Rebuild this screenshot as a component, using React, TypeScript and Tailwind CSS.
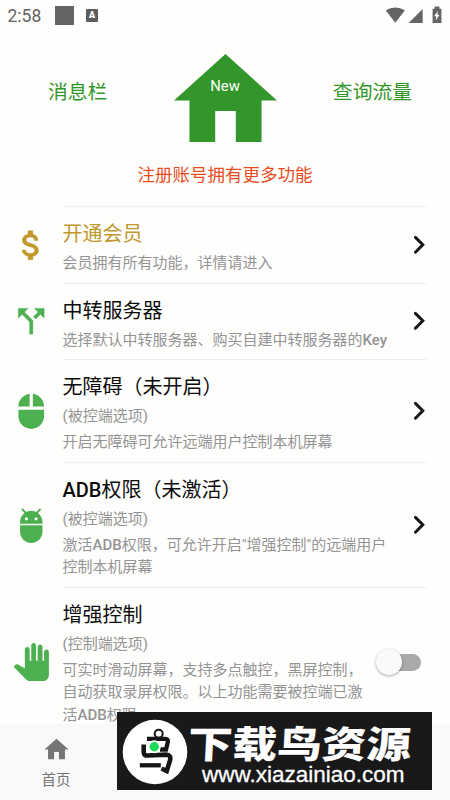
import type { ReactNode } from "react";

const icons = {
  money:
    "M11.8 10.9c-2.27-.59-3-1.2-3-2.15 0-1.09 1.01-1.85 2.7-1.85 1.78 0 2.44.85 2.5 2.1h2.21c-.07-1.72-1.12-3.3-3.21-3.81V3h-3v2.16c-1.94.42-3.5 1.68-3.5 3.61 0 2.31 1.91 3.46 4.7 4.13 2.5.6 3 1.48 3 2.41 0 .69-.49 1.79-2.7 1.79-2.06 0-2.87-.92-2.98-2.1h-2.2c.12 2.19 1.76 3.42 3.68 3.83V21h3v-2.15c1.95-.37 3.5-1.5 3.5-3.55 0-2.84-2.43-3.81-4.7-4.4z",
  split:
    "M14 4l2.29 2.29-2.88 2.88 1.42 1.42 2.88-2.88L20 10V4zm-4 0H4v6l2.29-2.29 4.71 4.7V20h2v-8.41l-5.29-5.3z",
  mouse:
    "M13 1.07V9h7c0-4.08-3.05-7.44-7-7.93zM4 15c0 4.42 3.58 8 8 8s8-3.58 8-8v-4H4v4zm7-13.93C7.05 1.56 4 4.92 4 9h7V1.07z",
  adb: "M5 16c0 3.87 3.13 7 7 7s7-3.13 7-7v-4H5v4zM16.12 4.37l2.1-2.1-.82-.83-2.3 2.31C14.16 3.28 13.12 3 12 3s-2.16.28-3.09.75L6.6 1.44l-.82.83 2.1 2.1C6.14 5.64 5 7.68 5 10v1h14v-1c0-2.32-1.14-4.36-2.88-5.63zM9 9c-.55 0-1-.45-1-1s.45-1 1-1 1 .45 1 1-.45 1-1 1zm6 0c-.55 0-1-.45-1-1s.45-1 1-1 1 .45 1 1-.45 1-1 1z",
  hand: "M23 5.5V20c0 2.2-1.8 4-4 4h-7.3c-1.08 0-2.1-.43-2.85-1.19L1 14.83s1.26-1.23 1.3-1.25c.22-.19.49-.29.79-.29.22 0 .42.06.6.16.04.01 4.31 2.46 4.31 2.46V4c0-.83.67-1.5 1.5-1.5S11 3.17 11 4v7h1V1.5c0-.83.67-1.5 1.5-1.5S15 .67 15 1.5V11h1V2.5c0-.83.67-1.5 1.5-1.5s1.5.67 1.5 1.5V11h1V5.5c0-.83.67-1.5 1.5-1.5s1.5.67 1.5 1.5z",
  home: "M10 20v-6h4v6h5v-8h3L12 3 2 12h3v8z",
};

function Latin({ children }: { children: ReactNode }) {
  return <span className="font-medium">{children}</span>;
}

function Chevron() {
  return (
    <svg width="14" height="20" viewBox="0 0 14 20" fill="none" stroke="#171717" strokeWidth="3" strokeLinecap="round">
      <path d="M3.4 2.4 10.8 9.8 3.4 17.2" />
    </svg>
  );
}

function Toggle() {
  return (
    <div className="flex h-[26px] w-[49.5px] items-center">
      <div className="ml-[2px] flex h-[17px] w-[43px] items-center rounded-full bg-[#a9a9a9]">
        <div className="-ml-[2px] h-[26px] w-[26px] shrink-0 rounded-full bg-[#fafafa] shadow-[0_1px_3px_rgba(0,0,0,0.35)]" />
      </div>
    </div>
  );
}

type RowProps = {
  icon: string;
  title: ReactNode;
  note?: string;
  lines: ReactNode[];
  height: string;
  gold?: boolean;
  bold?: boolean;
  toggle?: boolean;
};

function Row({ icon, title, note, lines, height, gold, bold, toggle }: RowProps) {
  return (
    <div className={"flex shrink-0 " + height}>
      <div className="flex w-[62.5px] shrink-0 items-center pt-px pl-[12px]">
        <svg
          width="38.5"
          height="38.5"
          viewBox="0 0 24 24"
          strokeWidth={bold ? 0.3 : 0}
          className={gold ? "fill-[#c0982c] stroke-[#c0982c]" : "fill-[#4caf50] stroke-[#4caf50]"}
        >
          <path d={icon} />
        </svg>
      </div>
      <div className="flex w-[363px] items-center border-t border-[#ececea]">
        <div className="h-full flex-1 pt-[13px] whitespace-nowrap">
          <div className={"text-[20px] leading-[28px] " + (gold ? "text-[#c0982c]" : "text-[#0c0c0c]")}>{title}</div>
          <div className="mt-[4px] text-[15px] leading-[22.4px] text-[#949494]">
            {note && <div className="mb-[3.6px]">{note}</div>}
            {lines.map((line, i) => (
              <div key={i}>{line}</div>
            ))}
          </div>
        </div>
        {toggle ? <Toggle /> : <Chevron />}
      </div>
    </div>
  );
}

function StatusBar() {
  return (
    <div className="flex h-[31px] shrink-0 items-center pr-[7px] pl-[7.5px] text-[#646464]">
      <span className="mt-px w-[47.5px] text-[17.5px] leading-[31px]">2:58</span>
      <div className="mt-[-1px] h-[19px] w-[19px] bg-[#646464]" />
      <div className="ml-[12px] flex h-[13px] w-[12px] items-center justify-center rounded-[1px] bg-[#5c5c5c] text-[9px] leading-none font-black text-white">
        A
      </div>
      <svg className="ml-auto" width="58" height="20" viewBox="0 0 58 20" fill="currentColor">
        <path d="M0.7 4.3Q10.3 -1.4 19.9 4.3L10.3 16.7Z" />
        <path d="M37.7 3V17H23.7Z" />
        <path
          fillRule="evenodd"
          d="M47.6 2.7h2V.5h4.8v2.2h2V17h-8.8zM53 4.7l-3.8 5.6h2.2l-.9 4.5 4-6.1h-2.2z"
        />
      </svg>
    </div>
  );
}

function Watermark() {
  return (
    <div className="absolute top-[712px] left-[117px] flex h-[78px] w-[315px] items-center bg-[#191919] pl-[5px]">
      <svg width="66" height="66" viewBox="0 0 66 66" fill="none" className="mt-[2px] shrink-0">
        <circle cx="33" cy="33" r="32.3" fill="#fff" />
        <g stroke="#151515">
          <circle cx="36.7" cy="14.8" r="4" strokeWidth="2" />
          <path d="M25 19.8H43.5Q46.5 20 45.8 23L44 30.5H38" strokeWidth="4.3" />
          <path d="M21.7 25.5V33Q21.8 37 26 36.5L44 35.6Q49.5 36 48 41.5L44.7 52L39.5 49.5" strokeWidth="4.6" />
          <path d="M17.8 46.3H38.8" strokeWidth="4.3" />
        </g>
        <circle cx="32.3" cy="27.7" r="6.5" fill="#fff" />
        <circle cx="32.3" cy="27.7" r="4.7" fill="#1ddb5b" />
      </svg>
      <div className="flex flex-col items-start pt-[8px] whitespace-nowrap text-white">
        <div className="flex h-[38px] -skew-x-[3deg] items-center font-['Noto_Sans_CJK_SC',sans-serif] text-[37.5px] leading-[38px] font-black">
          <span className="origin-left scale-x-[1.19]">下载鸟资源</span>
        </div>
        <div className="mt-px ml-[14px] font-['Liberation_Sans',sans-serif] text-[22.5px] leading-[25px]">
          <span className="[-webkit-text-stroke:0.3px_white]">www.xiazainiao.com</span>
        </div>
      </div>
    </div>
  );
}

export default function App() {
  return (
    <div className="relative flex h-[800px] w-[450px] flex-col overflow-hidden bg-[#fefefd] font-[Roboto,'Noto_Sans_CJK_SC',sans-serif]">
      <StatusBar />
      <header className="flex h-[175px] shrink-0 flex-col items-center">
        <div className="mt-[22.5px] flex h-[88px] w-full pl-[48px] text-[19.8px] text-[#33962b]">
          <span className="mt-[25px] w-[125.5px] shrink-0 leading-[28px]">消息栏</span>
          <div className="grid shrink-0">
            <svg
              className="col-start-1 row-start-1"
              width="103"
              height="88"
              viewBox="2 3 20 17"
              preserveAspectRatio="none"
              fill="#33962b"
            >
              <path d={icons.home} />
            </svg>
            <span className="col-start-1 row-start-1 mt-[22.5px] text-center text-[14.8px] leading-[20px] text-white">
              New
            </span>
          </div>
          <span className="mt-[25px] w-[135.5px] shrink-0 text-right leading-[28px]">查询流量</span>
        </div>
        <div className="mt-[21px] text-[17.5px] leading-[25px] text-[#ea4c1e]">注册账号拥有更多功能</div>
      </header>

      <main className="flex h-[518px] shrink-0 flex-col overflow-hidden">
        <Row icon={icons.money} gold bold height="h-[76.5px]" title="开通会员" lines={["会员拥有所有功能，详情请进入"]} />
        <Row
          icon={icons.split}
          bold
          height="h-[76.5px]"
          title="中转服务器"
          lines={[
            <>
              选择默认中转服务器、购买自建中转服务器的<Latin>Key</Latin>
            </>,
          ]}
        />
        <Row
          icon={icons.mouse}
          height="h-[103px]"
          title="无障碍（未开启）"
          note="(被控端选项)"
          lines={["开启无障碍可允许远端用户控制本机屏幕"]}
        />
        <Row
          icon={icons.adb}
          height="h-[125px]"
          title={
            <>
              <Latin>ADB</Latin>权限（未激活）
            </>
          }
          note="(被控端选项)"
          lines={[
            <>
              激活<Latin>ADB</Latin>权限，可允许开启"增强控制"的远端用户
            </>,
            "控制本机屏幕",
          ]}
        />
        <Row
          icon={icons.hand}
          height="h-[149px]"
          title="增强控制"
          note="(控制端选项)"
          toggle
          lines={[
            "可实时滑动屏幕，支持多点触控，黑屏控制，",
            "自动获取录屏权限。以上功能需要被控端已激",
            <>
              活<Latin>ADB</Latin>权限。
            </>,
          ]}
        />
      </main>

      <nav className="flex h-[76px] shrink-0 bg-[#f9f9f9]">
        <div className="flex w-[112px] flex-col items-center pt-[11px] text-[#757575]">
          <svg width="29" height="29" viewBox="0 0 24 24" fill="currentColor">
            <path d={icons.home} />
          </svg>
          <span className="mt-[6px] text-[14.5px] leading-[21px]">首页</span>
        </div>
      </nav>

      <Watermark />
    </div>
  );
}
